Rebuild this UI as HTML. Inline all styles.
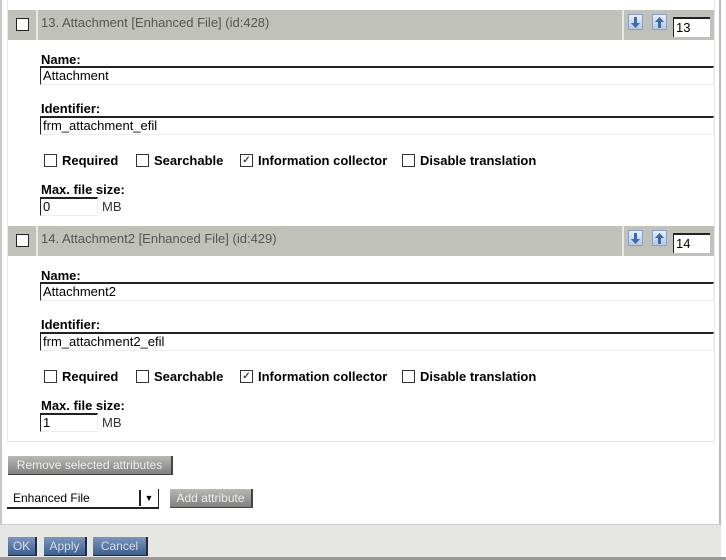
<!DOCTYPE html>
<html><head><style>
*{margin:0;padding:0;box-sizing:border-box}
body{width:726px;height:560px;background:#fff;position:relative;overflow:hidden;font-family:"Liberation Sans",sans-serif;font-size:13px;color:#000}
.a{position:absolute}
.hdr{position:absolute;left:8px;width:706px;height:30px;background:#c0c1b8}
.hdr .sep{position:absolute;left:28px;top:0;width:2px;height:30px;background:#e8e8e2}
.hdr .sep2{position:absolute;left:614px;top:0;width:2px;height:30px;background:#e8e8e2}
.cb{position:absolute;width:13px;height:13px;border:1px solid #222;background:#fff}
.lbl{position:absolute;left:41px;font-weight:bold;font-size:13px}
.inp{position:absolute;left:40px;width:674px;height:19px;border-top:2px solid #222;border-left:1px solid #222;border-bottom:1px solid #eee;border-right:1px solid #eee;padding:0 2px;font-size:13px;line-height:16px}
.sm{position:absolute;left:40px;width:58px;height:19px;border-top:2px solid #222;border-left:1px solid #222;border-bottom:1px solid #eee;border-right:1px solid #eee;padding:0 2px;font-size:13px;line-height:16px}
.ck{position:absolute;font-weight:bold;font-size:13px;display:flex;align-items:center;height:14px}
.ck i{display:block;width:13px;height:13px;border:1px solid #333;margin-right:5px;font-style:normal;font-size:10px;line-height:11px;text-align:center;color:#444}
.arr{position:absolute;width:15px;height:16px;background:linear-gradient(#e8eef8,#b8c8e0);border:1px solid #8aa0c0}
.num{position:absolute;width:37px;height:20px;border-top:2px solid #222;border-left:1px solid #222;background:#fff;padding:1px 2px;font-size:13px;line-height:16px}
.btn{position:absolute;height:19px;background:linear-gradient(#b8b8b4,#808080);color:#eee;font-size:12px;line-height:18px;text-align:center;border-right:2px solid #444;border-bottom:1px solid #444}
.bb{position:absolute;height:19px;background:linear-gradient(#7a96bc,#3d5f8e);color:#dde;font-size:12px;line-height:18px;text-align:center;border-right:2px solid #1e2e48;border-bottom:1px solid #1e2e48}
.t{position:absolute;left:41px;color:#555;font-size:13px}
</style></head><body>
<div class="a" style="left:0;top:0;width:2px;height:560px;background:#c8c8c8"></div>
<div class="a" style="left:719px;top:0;width:2px;height:560px;background:#bbb"></div>
<div class="a" style="left:7px;top:0;width:708px;height:442px;border:1px solid #e6e6e6;border-top:none"></div>

<div class="hdr" style="top:10px"><div class="sep"></div><div class="sep2"></div></div>
<div class="cb" style="left:16px;top:18px"></div>
<div class="t" style="top:15px">13. Attachment [Enhanced File] (id:428)</div>
<div class="arr" style="left:628px;top:14px"><svg width="13" height="14"><path d="M5 2h3v6h3l-4.5 5L2 8h3z" fill="#3a6aa8"/></svg></div>
<div class="arr" style="left:652px;top:14px"><svg width="13" height="14"><path d="M5 13h3V7h3L6.5 2 2 7h3z" fill="#3a6aa8"/></svg></div>
<div class="num" style="left:673px;top:17px">13</div>
<div class="lbl" style="top:52px">Name:</div>
<div class="inp" style="top:66px">Attachment</div>
<div class="lbl" style="top:101px">Identifier:</div>
<div class="inp" style="top:116px">frm_attachment_efil</div>
<div class="ck" style="left:44px;top:153px"><i></i>Required</div>
<div class="ck" style="left:136px;top:153px"><i></i>Searchable</div>
<div class="ck" style="left:240px;top:153px"><i>✓</i>Information collector</div>
<div class="ck" style="left:402px;top:153px"><i></i>Disable translation</div>
<div class="lbl" style="top:182px">Max. file size:</div>
<div class="sm" style="top:197px">0</div>
<div class="a" style="left:102px;top:199px;color:#333">MB</div>

<div class="hdr" style="top:226px"><div class="sep"></div><div class="sep2"></div></div>
<div class="cb" style="left:16px;top:234px"></div>
<div class="t" style="top:231px">14. Attachment2 [Enhanced File] (id:429)</div>
<div class="arr" style="left:628px;top:230px"><svg width="13" height="14"><path d="M5 2h3v6h3l-4.5 5L2 8h3z" fill="#3a6aa8"/></svg></div>
<div class="arr" style="left:652px;top:230px"><svg width="13" height="14"><path d="M5 13h3V7h3L6.5 2 2 7h3z" fill="#3a6aa8"/></svg></div>
<div class="num" style="left:673px;top:233px">14</div>
<div class="lbl" style="top:268px">Name:</div>
<div class="inp" style="top:282px">Attachment2</div>
<div class="lbl" style="top:317px">Identifier:</div>
<div class="inp" style="top:332px">frm_attachment2_efil</div>
<div class="ck" style="left:44px;top:369px"><i></i>Required</div>
<div class="ck" style="left:136px;top:369px"><i></i>Searchable</div>
<div class="ck" style="left:240px;top:369px"><i>✓</i>Information collector</div>
<div class="ck" style="left:402px;top:369px"><i></i>Disable translation</div>
<div class="lbl" style="top:398px">Max. file size:</div>
<div class="sm" style="top:413px">1</div>
<div class="a" style="left:102px;top:415px;color:#333">MB</div>

<div class="btn" style="left:8px;top:456px;width:165px">Remove selected attributes</div>
<div class="a" style="left:7px;top:489px;width:152px;height:20px;border-bottom:2px solid #222;border-right:1px solid #222;background:#fff;padding:2px 6px;font-size:12px">Enhanced File</div>
<div class="a" style="left:139px;top:490px;width:18px;height:16px;border-left:2px solid #222;text-align:center;font-size:9px;line-height:16px">▼</div>
<div class="btn" style="left:170px;top:489px;width:83px">Add attribute</div>

<div class="a" style="left:0;top:524px;width:721px;height:33px;background:#e6e6e2;border-top:1px solid #ccc"></div>
<div class="a" style="left:0;top:557px;width:726px;height:3px;background:#999"></div>
<div class="bb" style="left:8px;top:537px;width:29px">OK</div>
<div class="bb" style="left:44px;top:537px;width:43px">Apply</div>
<div class="bb" style="left:93px;top:537px;width:55px">Cancel</div>
</body></html>
